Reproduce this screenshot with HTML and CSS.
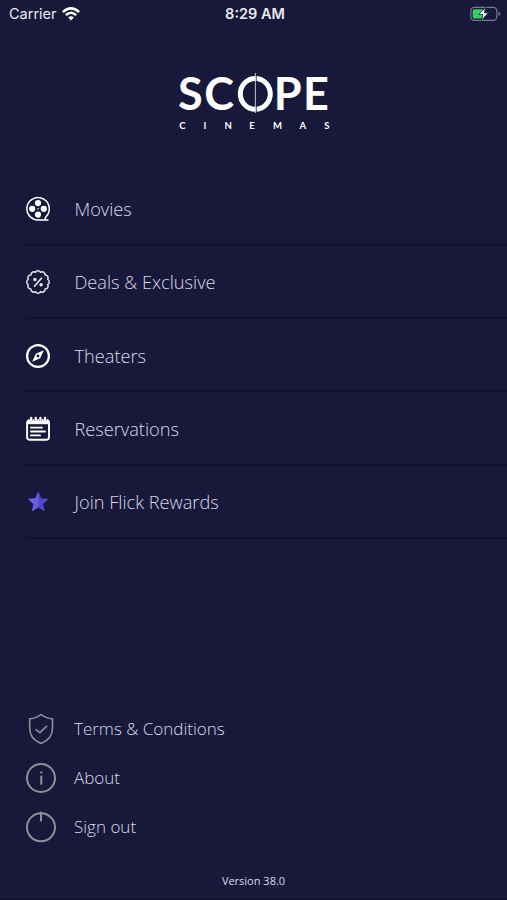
FILE: index.html
```html
<!DOCTYPE html>
<html lang="en">
<head>
<meta charset="utf-8">
<meta name="viewport" content="width=device-width, initial-scale=1">
<title>Scope Cinemas</title>
<link rel="stylesheet" href="styles.css">
</head>
<body>
<div class="screen">
  <header class="status">
    <div class="carrier"><span class="carrier-name">Carrier</span>
      <svg class="wifi" width="18" height="14" viewBox="0 0 18 14" fill="none" stroke="#fff" stroke-width="2.5">
        <path d="M.9 5.1Q9-2.4 17.1 5.1M3.9 8.2Q9 3.4 14.1 8.2"/><path d="M6.2 10.5Q9 7.9 11.8 10.5L9 13.4Z" fill="#fff" stroke="none"/>
      </svg>
    </div>
    <div class="time">8:29 AM</div>
    <svg class="battery" width="31" height="16" viewBox="0 0 31 16">
      <rect x=".8" y="1.3" width="26" height="13" rx="3.6" fill="none" stroke="#777990" stroke-width="1.2"/>
      <path d="M28.6 5.5Q30.4 6.2 30.4 7.8T28.6 10.1Z" fill="#777990"/>
      <rect x="2.7" y="3.2" width="11.5" height="9.2" rx="2" fill="#35d35d"/>
      <path d="M15.7 1.2L8.8 8.5H13L11.4 14.4L18.4 6.8H14.2Z" fill="#fff" stroke="#18193a" stroke-width=".8"/>
    </svg>
  </header>
  <svg class="logo" width="160" height="64" viewBox="0 0 160 64" fill="#fff">
    <g class="logo-name">
      <text x="4" y="40.3">S</text>
      <text x="30.3" y="40.3">C</text>
      <text x="99.7" y="40.3">P</text>
      <text x="129" y="40.3">E</text>
    </g>
    <ellipse cx="81.3" cy="23.8" rx="15" ry="15.4" fill="none" stroke="#fff" stroke-width="5"/>
    <path d="M82.2 5V42" stroke="#18193a" stroke-width=".9"/><path d="M81.4 3V43" stroke="#d5d5e0" stroke-width=".9"/>
    <g class="logo-sub">
      <text x="5.3" y="59.3">C</text><text x="29.5" y="59.3">I</text><text x="50.5" y="59.3">N</text><text x="75.3" y="59.3">E</text><text x="99" y="59.3">M</text><text x="125.5" y="59.3">A</text><text x="150.2" y="59.3">S</text>
    </g>
  </svg>
  <nav class="menu">
    <a class="row"><svg class="icon" viewBox="0 0 26 26" fill="none" stroke="#fff" stroke-width="1.5">
      <path d="M23.5 24H13A11.2 11.2 0 1 1 20.8 20.9C19.8 22 20.3 23.5 21 24"/>
      <g fill="#fff" stroke="none"><circle cx="13" cy="7.1" r="3.1"/><circle cx="13" cy="18.6" r="3.1"/><circle cx="7.2" cy="12.8" r="3.1"/><circle cx="18.8" cy="12.8" r="3.1"/><circle cx="13" cy="12.8" r=".8"/></g>
    </svg><span>Movies</span></a>
    <a class="row"><svg class="icon" viewBox="0 0 26 26" fill="none" stroke="#e4e4ee" stroke-width="1.5" stroke-linejoin="round">
      <path d="M22.66 10.41A2.9 2.9 0 0 1 22.66 15.59A2.9 2.9 0 0 1 20.07 20.07A2.9 2.9 0 0 1 15.59 22.66A2.9 2.9 0 0 1 10.41 22.66A2.9 2.9 0 0 1 5.93 20.07A2.9 2.9 0 0 1 3.34 15.59A2.9 2.9 0 0 1 3.34 10.41A2.9 2.9 0 0 1 5.93 5.93A2.9 2.9 0 0 1 10.41 3.34A2.9 2.9 0 0 1 15.59 3.34A2.9 2.9 0 0 1 20.07 5.93A2.9 2.9 0 0 1 22.66 10.41Z"/>
      <path d="M16.4 9.2L9.6 17" stroke-linecap="round" stroke-width="1.7"/><g fill="#e4e4ee"><circle cx="9.9" cy="10.5" r="1"/><circle cx="16.1" cy="15.7" r="1"/></g>
    </svg><span>Deals &amp; Exclusive</span></a>
    <a class="row"><svg class="icon" viewBox="0 0 26 26">
      <circle cx="13" cy="13" r="10.9" fill="none" stroke="#fff" stroke-width="2.2"/>
      <path fill="#fff" fill-rule="evenodd" d="M18.8 7.2L15.2 15.2L7.2 18.8L10.8 10.8ZM13 11.6A1.4 1.4 0 1 0 13 14.4A1.4 1.4 0 1 0 13 11.6Z"/>
    </svg><span>Theaters</span></a>
    <a class="row"><svg class="icon" viewBox="0 0 26 26" fill="none" stroke="#fff" stroke-width="1.9" stroke-linecap="round">
      <rect x="2.1" y="4" width="21.9" height="19.8" rx="2.8"/>
      <path d="M3 6H23" stroke-width="4.4" stroke-linecap="butt"/>
      <g stroke="#18193a" stroke-width="3.4"><path d="M6.2 2.4V3.6M10.8 2.4V3.6M15.4 2.4V3.6M20 2.4V3.6"/></g>
      <path d="M6.2 1.9V4.3M10.8 1.9V4.3M15.4 1.9V4.3M20 1.9V4.3" stroke-width="2.3"/>
      <path d="M5.9 11.6H17M5.9 15.5H20M5.9 19.4H15"/>
    </svg><span>Reservations</span></a>
    <a class="row"><svg class="icon" viewBox="0 0 26 26">
      <path fill="#5148cf" d="M13.3 2.8L16.2 9.3L23.6 10.1L18.1 15L19.7 22.3L13.3 18.6L6.9 22.3L8.5 15L3 10.1L10.4 9.3Z"/>
      <path fill="#665fe0" d="M13.3 2.8V18.6L6.9 22.3L8.5 15L3 10.1L10.4 9.3Z"/>
    </svg><span>Join Flick Rewards</span></a>
  </nav>
  <nav class="links">
    <a class="link"><svg class="link-icon" viewBox="0 0 32 32" fill="none" stroke="#8f8f98" stroke-width="1.6" stroke-linejoin="round">
      <path d="M16 1.5C12.5 4.3 8.8 5.4 4.7 5.8V15C4.7 22.3 9 27.8 16 30.4C23 27.8 27.5 22.3 27.5 15V5.8C23.2 5.4 19.5 4.3 16 1.5Z"/><path d="M11.1 16.6L14.8 19.7L21.6 13.3" stroke-linecap="round"/>
    </svg><span>Terms &amp; Conditions</span></a>
    <a class="link"><svg class="link-icon" viewBox="0 0 32 32" fill="none" stroke="#8f8f98" stroke-width="2">
      <circle cx="16" cy="16" r="14"/><path d="M16.3 13.7V22.8M16.3 9.4V11.6"/>
    </svg><span>About</span></a>
    <a class="link"><svg class="link-icon" viewBox="0 0 32 32" fill="none" stroke="#8f8f98" stroke-width="2">
      <circle cx="16" cy="16.3" r="14"/><path d="M16 .8V10.5"/>
    </svg><span>Sign out</span></a>
  </nav>
  <footer class="version">Version 38.0</footer>
</div>
</body>
</html>
```
FILE: styles.css
```css
* { box-sizing: border-box; }
body { margin: 0; background: #18193a; }
.screen {
  display: flex; flex-direction: column;
  width: 507px; height: 900px;
  background: #18193a; border-bottom: 1px solid #101027;
  color: #d8d8e6; font-family: "Open Sans", sans-serif; font-weight: 300;
  overflow: hidden;
}
.status {
  display: grid; grid-template-columns: 1fr auto 1fr; align-items: center;
  height: 27px; padding: 0 6px 0 9px;
  color: #e9e9f0; font-family: Inter, sans-serif; font-size: 14.5px; font-weight: 400;
}
.carrier { display: flex; align-items: center; gap: 5px; }
.time { font-weight: 600; }
.battery { justify-self: end; }
.logo { display: block; align-self: center; margin-top: 43px; flex: none; overflow: visible; }
.logo-name { font: 700 45px Lato, sans-serif; }
.logo-sub { font: 700 9.5px Lato, sans-serif; }
.menu { margin-top: 38.5px; }
.row {
  display: flex; align-items: center; gap: 24px;
  height: 73.3px; margin-left: 24.5px; padding-top: 2px;
  border-bottom: 2px solid #131330;
  font-size: 18.2px;
}
.icon { width: 26px; height: 26px; flex: none; }
.links { margin-top: auto; }
.link {
  display: flex; align-items: center; gap: 17.5px;
  height: 49px; padding-left: 24.5px;
  font-size: 17px;
}
.link-icon { width: 32px; height: 32px; flex: none; }
.version {
  height: 48px; padding-top: 22px; text-align: center;
  font-size: 11px; line-height: 15px; font-weight: 400;
}
```
